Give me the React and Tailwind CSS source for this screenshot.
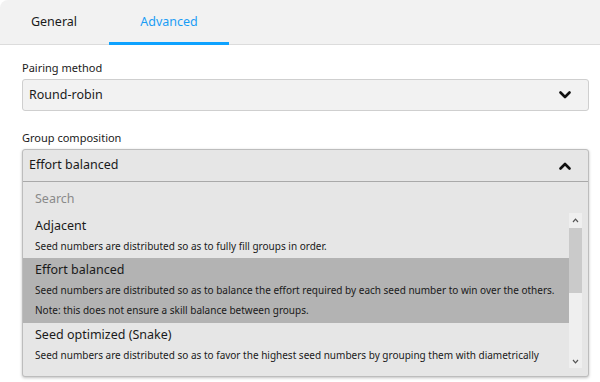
import { useState } from "react";

const Chevron = ({ up = false }) => (
  <svg width="12" height="8" viewBox="0 0 12 8">
    <path
      d={up ? "M1.5 6.5 L6 2 L10.5 6.5" : "M1.5 1.5 L6 6 L10.5 1.5"}
      fill="none"
      stroke="#111"
      strokeWidth="2.6"
      strokeLinecap="round"
      strokeLinejoin="round"
    />
  </svg>
);

const SmallArrow = ({ up = false }) => (
  <svg width="7" height="5" viewBox="0 0 7 5">
    <path
      d={up ? "M1 4 L3.5 1.2 L6 4" : "M1 1 L3.5 3.8 L6 1"}
      fill="none"
      stroke="#555"
      strokeWidth="1.2"
    />
  </svg>
);

const options = [
  {
    title: "Adjacent",
    lines: ["Seed numbers are distributed so as to fully fill groups in order."]
  },
  {
    title: "Effort balanced",
    lines: [
      "Seed numbers are distributed so as to balance the effort required by each seed number to win over the others.",
      "Note: this does not ensure a skill balance between groups."
    ]
  },
  {
    title: "Seed optimized (Snake)",
    lines: [
      "Seed numbers are distributed so as to favor the highest seed numbers by grouping them with diametrically opposed ones."
    ]
  }
];

export default function App() {
  const [tab, setTab] = useState("advanced");
  const [selected] = useState("Effort balanced");

  return (
    <div className="w-[600px] h-[382px] bg-white text-[#1a1a1a] overflow-hidden" style={{ fontFamily: "'Noto Sans', 'Open Sans', sans-serif" }}>
      {/* TABS */}
      <div className="flex h-[45px] bg-[#f2f2f2] border-b border-[#dcdcdc] rounded-tl-lg pl-[9px]">
        <button
          onClick={() => setTab("general")}
          className={`w-[90px] text-[12.5px] relative ${tab === "general" ? "text-[#1a9df5]" : "text-[#1a1a1a]"}`}
        >
          General
        </button>
        <button
          onClick={() => setTab("advanced")}
          className={`w-[120px] ml-[10px] text-[12.5px] relative ${tab === "advanced" ? "text-[#1a9df5]" : "text-[#1a1a1a]"}`}
        >
          Advanced
          {tab === "advanced" && (
            <span className="absolute left-0 right-0 bottom-[-1px] h-[3px] bg-[#0ea2ff]" />
          )}
        </button>
      </div>

      <div className="px-[22px] pt-[15px] pr-[11px]">
        {/* PAIRING METHOD */}
        <label className="block text-[11px] leading-[16px] mb-[3px]">Pairing method</label>
        <div className="flex items-center justify-between h-[32px] bg-[#f2f2f2] border border-[#cfcfcf] rounded-[3px] pl-[6px] pr-[17px]">
          <span className="text-[12.5px]">Round-robin</span>
          <Chevron />
        </div>

        {/* GROUP COMPOSITION */}
        <label className="block text-[11px] leading-[16px] mt-[19px] mb-[3px]">Group composition</label>
        <div className="bg-[#e6e6e6] border border-[#bdbdbd] rounded-[3px] shadow-[0_1px_3px_rgba(0,0,0,0.25)]">
          <div className="flex items-center justify-between h-[32px] border-b border-[#a9a9a9] pl-[6px] pr-[17px]">
            <span className="text-[12.5px]">{selected}</span>
            <Chevron up />
          </div>
          <div className="h-[31px] flex items-center pt-[3px] pl-[12px] text-[12.5px] text-[#8a8a8a]">Search</div>
          <div className="flex h-[155px]">
            <div className="flex-1 overflow-hidden">
              {options.map((o, i) => (
                <div
                  key={o.title}
                  className={`pl-[12px] pr-[4px] ${i === 0 ? "pt-[3px] pb-[2px]" : "pt-[2px] pb-[3px]"} ${o.title === selected ? "bg-[#b3b3b3]" : ""}`}
                >
                  <div className="text-[12.5px] leading-[20px]">{o.title}</div>
                  {o.lines.map(l => (
                    <div key={l} className="text-[10px] leading-[20px]">{l}</div>
                  ))}
                </div>
              ))}
            </div>
            <div className="w-[13px] flex flex-col bg-[#efefef]">
              <div className="h-[15px] flex items-center justify-center"><SmallArrow up /></div>
              <div className="h-[65px] bg-[#cacaca]" />
              <div className="flex-1" />
              <div className="h-[13px] flex items-center justify-center"><SmallArrow /></div>
            </div>
            <div className="w-[6px]" />
          </div>
          <div className="h-[8px]" />
        </div>
      </div>
    </div>
  );
}
